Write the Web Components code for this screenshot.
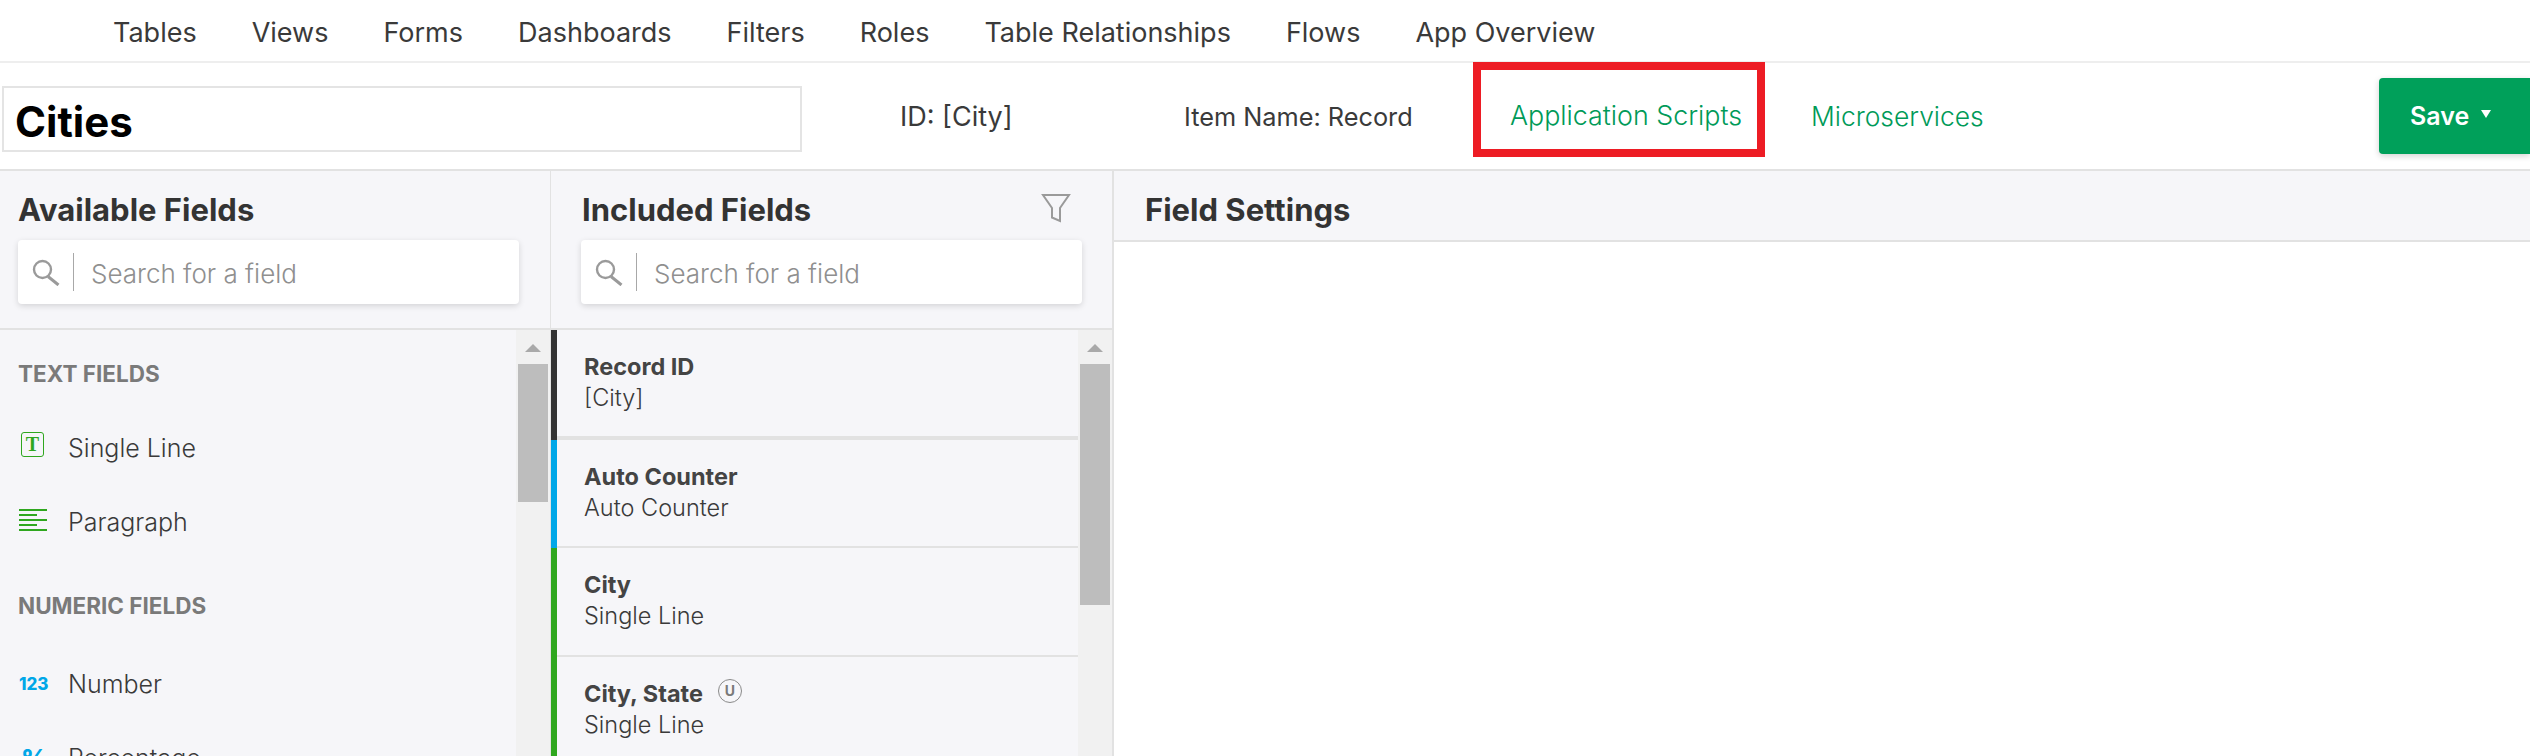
<!DOCTYPE html>
<html>
<head>
<meta charset="utf-8">
<title>Cities</title>
<style>
  html, body { margin: 0; height: 756px; overflow: hidden; background: #fff; }
  body { font-family: Inter, Lato, sans-serif; color: #3a3a3a; }
</style>
</head>
<body>
<app-nav>
  <span>Tables</span><span>Views</span><span>Forms</span><span>Dashboards</span><span>Filters</span>
  <span>Roles</span><span>Table Relationships</span><span>Flows</span><span>App Overview</span>
</app-nav>
<record-bar name="Cities" record-id="ID: [City]" item-name="Item Name: Record"></record-bar>
<field-layout>
  <field-panel title-text="Available Fields" style="width:550px;border-right:1px solid #e2e2e2">
    <scroll-list thumb="138px">
      <field-group label="TEXT FIELDS" gap="22px" top="29px">
        <palette-item icon="text">Single Line</palette-item>
        <palette-item icon="paragraph">Paragraph</palette-item>
      </field-group>
      <field-group label="NUMERIC FIELDS" gap="26px" top="32px">
        <palette-item icon="number">Number</palette-item>
        <palette-item icon="percent">Percentage</palette-item>
      </field-group>
    </scroll-list>
  </field-panel>
  <field-panel title-text="Included Fields" filter style="width:561px;border-right:2px solid #e2e2e2" search-left="30px" title-shift="1px">
    <scroll-list thumb="241px">
      <included-field bar="#333333" line="4px" height="110px" label="Record ID" kind="[City]"></included-field>
      <included-field bar="#00a7e8" line="2px" height="108px" label="Auto Counter" kind="Auto Counter"></included-field>
      <included-field bar="#2fa71f" line="2px" height="109px" label="City" kind="Single Line"></included-field>
      <included-field bar="#2fa71f" line="2px" height="108px" label="City, State" kind="Single Line" unique></included-field>
    </scroll-list>
  </field-panel>
  <settings-panel></settings-panel>
</field-layout>

<script>
// barra de navegacion superior
class AppNav extends HTMLElement {
  constructor() {
    super();
    this.attachShadow({ mode: "open" });
    this.shadowRoot.innerHTML = `
      <style>
        :host {
          display: flex;
          align-items: center;
          gap: 55px;
          box-sizing: border-box;
          height: 63px;
          padding: 3px 0 0 113px;
          border-bottom: 2px solid #eeeeee;
          font-size: 27px;
          color: #3a3a3a;
        }
      </style>
      <slot></slot>
    `;
  }
}

class RecordBar extends HTMLElement {
  constructor() {
    super();
    this.attachShadow({ mode: "open" });
  }

  connectedCallback() {
    this.shadowRoot.innerHTML = `
      <style>
        :host {
          display: flex;
          align-items: center;
          box-sizing: border-box;
          height: 108px;
          border-bottom: 2px solid #e2e2e2;
          padding-left: 2px;
          font-size: 25.3px;
        }
        .name {
          box-sizing: border-box;
          width: 800px;
          height: 66px;
          margin-top: 5px;
          padding-left: 11px;
          border: 2px solid #e4e4e4;
          font-size: 42px;
          font-weight: 700;
          line-height: 67px;
          color: #000;
        }
        .id { width: 284px; margin-left: 98px; font-size: 27px; }
        .item { width: 289px; }
        .hilite {
          box-sizing: border-box;
          align-self: flex-start;
          width: 292px;
          height: 95px;
          margin-top: -1px;
          padding-left: 29px;
          border: 8px solid #ed1c24;
          line-height: 90px;
          color: #009a58;
          font-size: 26.8px;
          font-weight: 300;
          white-space: nowrap;
        }
        .link { margin-left: 46px; color: #009a58; font-size: 26.4px; font-weight: 300; }
        .save {
          display: flex;
          align-items: center;
          box-sizing: border-box;
          width: 151px;
          height: 76px;
          margin-left: auto;
          padding-left: 31px;
          border-radius: 4px 0 0 4px;
          background: #00a05a;
          box-shadow: 0 2px 6px rgba(0, 0, 0, 0.18);
          color: #fff;
          font-size: 25px;
          font-weight: 600;
        }
        .caret {
          width: 0;
          height: 0;
          margin: -4px 0 0 12px;
          border-left: 5px solid transparent;
          border-right: 5px solid transparent;
          border-top: 8px solid #fff;
        }
      </style>
      <div class="name">${this.getAttribute("name")}</div>
      <div class="id">${this.getAttribute("record-id")}</div>
      <div class="item">${this.getAttribute("item-name")}</div>
      <div class="hilite">Application Scripts</div>
      <div class="link">Microservices</div>
      <div class="save">Save<span class="caret"></span></div>
    `;
  }
}

class FieldLayout extends HTMLElement {
  constructor() {
    super();
    this.attachShadow({ mode: "open" });
    this.shadowRoot.innerHTML = `
      <style>
        :host { display: flex; height: 585px; overflow: hidden; }
      </style>
      <slot></slot>
    `;
  }
}

class FieldPanel extends HTMLElement {
  constructor() {
    super();
    this.attachShadow({ mode: "open" });
  }

  connectedCallback() {
    const filtro = this.hasAttribute("filter")
      ? `<svg class="filter" width="30" height="30" viewBox="0 0 30 30" fill="none" stroke="#9a9a9a" stroke-width="2">
           <path d="M2 2H28L19 15V28L11 24.5V15Z"/>
         </svg>`
      : "";
    this.shadowRoot.innerHTML = `
      <style>
        :host {
          display: flex;
          flex-direction: column;
          flex: none;
          background: #f6f6f9;
        }
        header {
          position: relative;
          box-sizing: border-box;
          height: 159px;
          padding: 9px 0 0 ${this.getAttribute("search-left") || "18px"};
          border-bottom: 2px solid #e2e2e2;
        }
        h2 {
          margin: 0 0 0 ${this.getAttribute("title-shift") || "0"};
          font-size: 31px;
          font-weight: 700;
          line-height: 60px;
          color: #333;
        }
        .filter { position: absolute; top: 22px; right: 41px; }
        .search {
          display: flex;
          align-items: center;
          box-sizing: border-box;
          width: 501px;
          height: 64px;
          padding-left: 14px;
          border-radius: 4px;
          background: #fff;
          box-shadow: 0 2px 6px rgba(0, 0, 0, 0.14);
          font-size: 26px;
          font-weight: 300;
          color: #8f8f8f;
        }
        .sep { width: 1px; height: 38px; margin: 0 17px 0 13px; background: #a8a8a8; }
        .hint { padding-top: 2px; }
        .body { flex: 1; min-height: 0; display: flex; }
      </style>
      <header>
        <h2>${this.getAttribute("title-text")}</h2>
        ${filtro}
        <div class="search">
          <svg width="28" height="27" viewBox="0 0 28 27" fill="none" stroke="#9a9a9a" stroke-width="2.4">
            <circle cx="10.5" cy="10.5" r="8.5"/>
            <path d="M16 17.5L26.5 26" stroke-width="3"/>
          </svg>
          <span class="sep"></span>
          <span class="hint">Search for a field</span>
        </div>
      </header>
      <div class="body"><slot></slot></div>
    `;
  }
}

class ScrollList extends HTMLElement {
  constructor() {
    super();
    this.attachShadow({ mode: "open" });
  }

  connectedCallback() {
    this.shadowRoot.innerHTML = `
      <style>
        :host { display: flex; flex: 1; min-width: 0; }
        .content { flex: 1; min-width: 0; overflow: hidden; }
        .track {
          flex: none;
          box-sizing: border-box;
          width: 34px;
          padding: 14px 2px 0;
          background: #f1f1f1;
        }
        .arrow {
          width: 0;
          height: 0;
          margin: 0 auto 12px;
          border-left: 8px solid transparent;
          border-right: 8px solid transparent;
          border-bottom: 8px solid #a9a9a9;
        }
        .thumb { height: ${this.getAttribute("thumb")}; background: #bdbdbd; }
      </style>
      <div class="content"><slot></slot></div>
      <div class="track"><div class="arrow"></div><div class="thumb"></div></div>
    `;
  }
}

class FieldGroup extends HTMLElement {
  constructor() {
    super();
    this.attachShadow({ mode: "open" });
  }

  connectedCallback() {
    this.shadowRoot.innerHTML = `
      <style>
        :host { display: block; padding-top: ${this.getAttribute("top") || "28px"}; }
        .label {
          margin-bottom: ${this.getAttribute("gap")};
          padding-left: 18px;
          font-size: 22.5px;
          font-weight: 700;
          line-height: 30px;
          color: #7a7a7a;
        }
      </style>
      <div class="label">${this.getAttribute("label")}</div>
      <slot></slot>
    `;
  }
}

const PALETTE_ICONS = {
  text: `<span class="t">T</span>`,
  paragraph: `<svg class="lines" width="28" height="22" viewBox="0 0 28 22" fill="#2fa71f">
      <rect width="28" height="2" y="0"/><rect width="18" height="2" y="5"/>
      <rect width="28" height="2" y="10"/><rect width="18" height="2" y="15"/>
      <rect width="28" height="2" y="20"/></svg>`,
  number: `<span class="n">123</span>`,
  percent: `<span class="n p">%</span>`,
};

class PaletteItem extends HTMLElement {
  constructor() {
    super();
    this.attachShadow({ mode: "open" });
  }

  connectedCallback() {
    this.shadowRoot.innerHTML = `
      <style>
        :host {
          display: flex;
          align-items: center;
          height: 74px;
          padding-left: 19px;
          font-size: 25px;
          font-weight: 300;
          color: #3a3a3a;
        }
        .icon { display: flex; align-items: center; width: 49px; flex: none; }
        .t {
          box-sizing: border-box;
          width: 23px;
          height: 25px;
          margin: -7px 0 0 2px;
          border: 1.5px solid #2fa71f;
          border-radius: 3px;
          font: 700 20px/22px "Liberation Serif", serif;
          color: #2fa71f;
          text-align: center;
        }
        .lines { margin-top: -4px; }
        .n { font-size: 17px; font-weight: 800; letter-spacing: 0; color: #00a7e8; }
        .p { margin-left: 2px; font-size: 26px; }
      </style>
      <span class="icon">${PALETTE_ICONS[this.getAttribute("icon")]}</span>
      <slot></slot>
    `;
  }
}

class IncludedField extends HTMLElement {
  constructor() {
    super();
    this.attachShadow({ mode: "open" });
  }

  connectedCallback() {
    const unico = this.hasAttribute("unique") ? `<span class="u">U</span>` : "";
    this.shadowRoot.innerHTML = `
      <style>
        :host {
          display: block;
          box-sizing: border-box;
          height: ${this.getAttribute("height")};
          border-left: 6px solid ${this.getAttribute("bar")};
        }
        .row {
          box-sizing: border-box;
          height: 100%;
          padding: 21px 0 0 27px;
          border-bottom: ${this.getAttribute("line")} solid #e2e2e2;
          line-height: 31px;
        }
        .label {
          display: flex;
          align-items: center;
          font-size: 23.5px;
          font-weight: 700;
          color: #444;
        }
        .kind { font-size: 23.5px; font-weight: 300; color: #3a3a3a; }
        .u {
          box-sizing: border-box;
          width: 24px;
          height: 24px;
          margin: -5px 0 0 15px;
          border: 1.5px solid #8a8a8a;
          border-radius: 50%;
          font-size: 14px;
          line-height: 21px;
          text-align: center;
          color: #7a7a7a;
        }
      </style>
      <div class="row">
        <div class="label">${this.getAttribute("label")}${unico}</div>
        <div class="kind">${this.getAttribute("kind")}</div>
      </div>
    `;
  }
}

class SettingsPanel extends HTMLElement {
  constructor() {
    super();
    this.attachShadow({ mode: "open" });
    this.shadowRoot.innerHTML = `
      <style>
        :host { display: block; flex: 1; min-width: 0; background: #fff; }
        h2 {
          box-sizing: border-box;
          height: 71px;
          margin: 0;
          padding: 9px 0 0 31px;
          border-bottom: 2px solid #e2e2e2;
          background: #f6f6f9;
          font-size: 31px;
          font-weight: 700;
          line-height: 60px;
          color: #333;
        }
      </style>
      <h2>Field Settings</h2>
    `;
  }
}

customElements.define("app-nav", AppNav);
customElements.define("record-bar", RecordBar);
customElements.define("field-layout", FieldLayout);
customElements.define("field-panel", FieldPanel);
customElements.define("scroll-list", ScrollList);
customElements.define("field-group", FieldGroup);
customElements.define("palette-item", PaletteItem);
customElements.define("included-field", IncludedField);
customElements.define("settings-panel", SettingsPanel);
</script>
</body>
</html>
